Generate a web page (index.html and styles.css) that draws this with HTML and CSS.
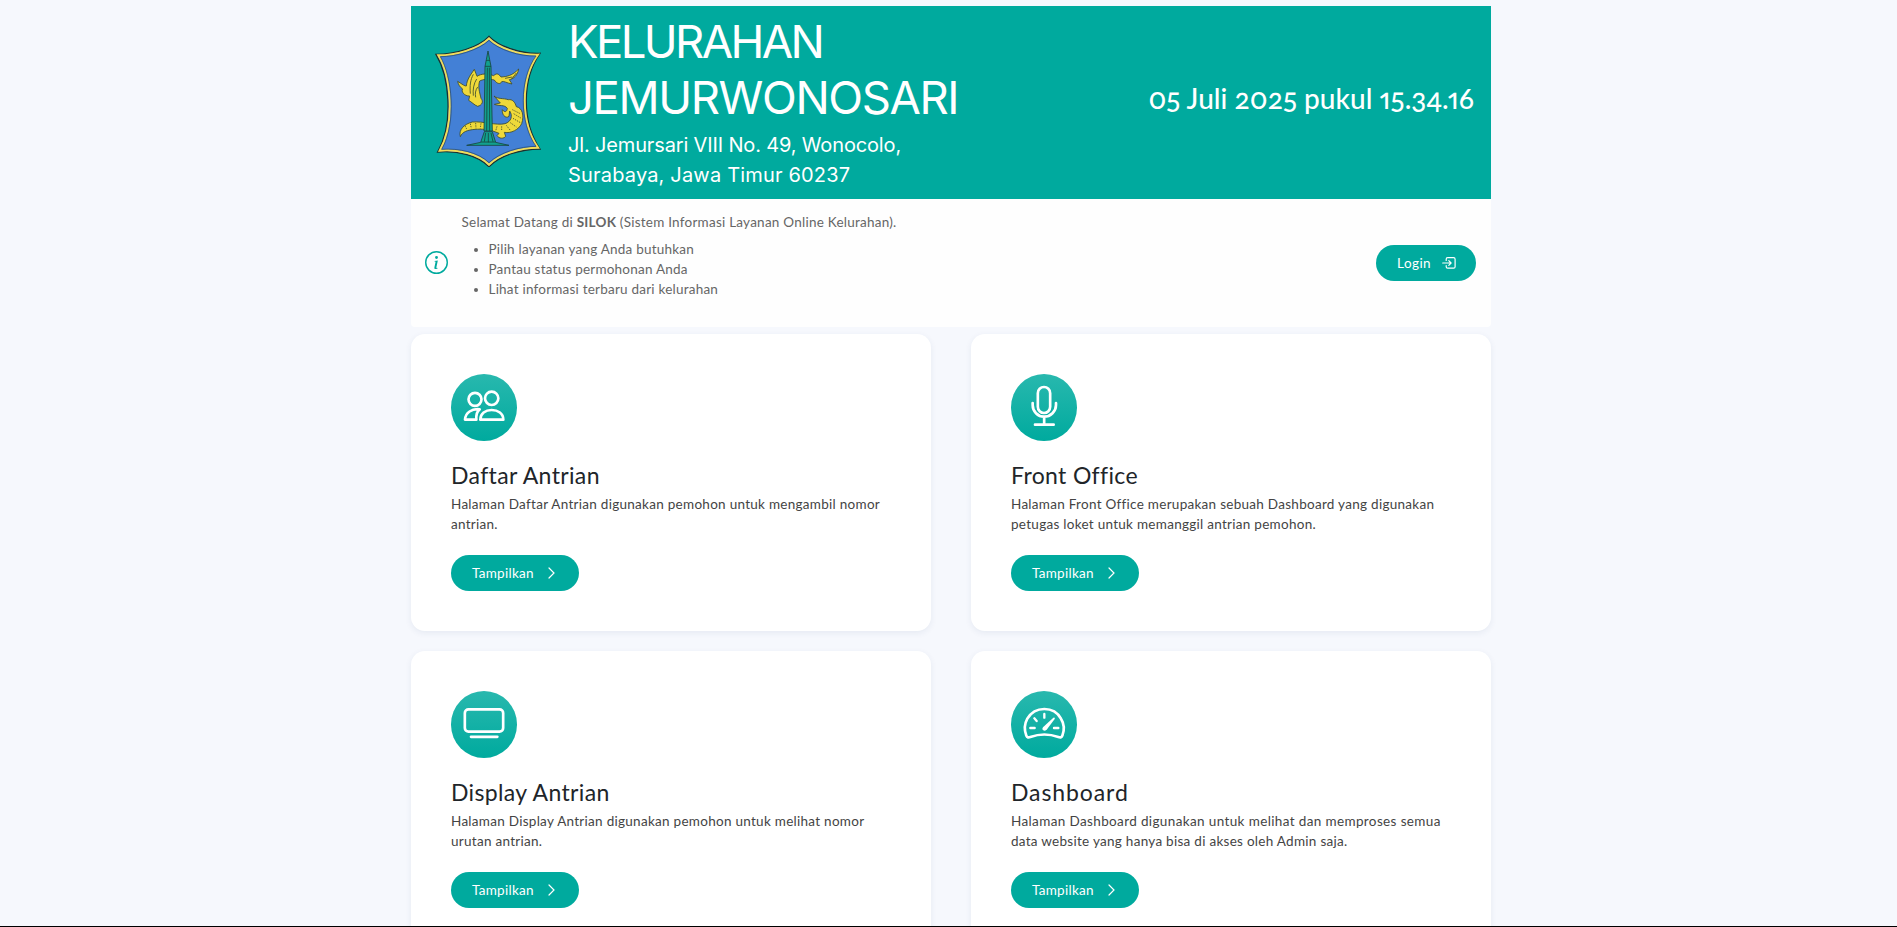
FILE: index.html
```
<!DOCTYPE html>
<html lang="id">
<head>
<meta charset="utf-8">
<title>SILOK - Kelurahan Jemurwonosari</title>
<link rel="stylesheet" href="styles.css">
</head>
<body>
<main class="page">
  <header class="banner">
    <svg class="crest" viewBox="30 28 318 398" preserveAspectRatio="none">
      <path d="M192 32C160 66 90 86 33 86C72 150 88 290 38 379C100 374 160 390 192 423C224 390 285 370 345 370C290 290 290 160 345 83C290 86 220 62 192 32Z" fill="#4380d6" stroke="#1e2f2c" stroke-width="4"/>
      <path d="M192 38C160 70 92 89 40 89C77 150 92 290 44 375C100 370 160 385 192 417C224 385 285 366 339 366C286 290 286 160 339 87C285 89 220 67 192 38Z" fill="none" stroke="#f3dd58" stroke-width="6"/>
      <path d="M192 44C160 74 94 93 46 93C81 152 96 290 50 371C102 367 160 380 192 411C224 380 285 362 333 362C282 290 282 160 333 91C285 93 220 72 192 44Z" fill="none" stroke="#26445f" stroke-width="2"/>
      <g fill="#efd93a" stroke="#3c4a2c" stroke-width="2.5" stroke-linejoin="round">
        <path d="M98 167C112 176 120 182 124 181C126 160 138 146 148 131L156 152C170 143 188 143 206 150C216 140 222 146 228 154C245 153 262 150 281 130C278 148 266 160 253 162L261 175C245 172 236 165 230 168C226 178 214 173 208 163C192 159 172 161 164 166C158 184 164 200 168 218C176 228 172 238 158 242C148 238 140 229 131 224L134 211C118 212 107 196 113 190C104 184 100 176 98 167Z"/>
        <path d="M207 211C220 221 234 217 250 222C262 220 270 229 274 243C292 246 298 270 290 294C281 312 258 324 238 320L242 332C236 340 222 339 216 330L222 323C190 309 170 310 150 311C128 313 112 318 106 333C100 312 118 295 142 289C175 286 212 300 240 294C259 288 264 270 254 256L252 272C240 281 230 264 232 252C240 262 246 258 247 248C238 236 224 242 208 236L226 232Z"/>
        <path d="M145 146C136 162 134 180 136 204M155 160C146 174 143 192 145 210M158 184C151 194 150 204 152 215M260 160L274 142M240 158L262 154" fill="none"/>
        <path d="M262 252L286 264M266 264L289 278M264 278L288 292M256 291L274 304M244 299L256 314M120 300L126 312M136 294L139 308M152 292L153 308M168 293L166 308M216 302L212 316M230 302L230 316" fill="none" stroke-dasharray="4 3"/>
      </g>
      <g fill="#11a08e" stroke="#18453f" stroke-width="2.5">
        <path d="M189 76L184 102L180 122L177 316H202L198 122L194 102Z"/>
        <path d="M178 318H202L212 350L252 359H125L167 350Z"/>
        <path d="M187 126L185 316M193 126L194 316M180 122H198M183 104H195M182 322L178 348M190 322V350M198 322L204 348M168 349H212" fill="none"/>
      </g>
    </svg>
    <div class="identity">
      <h1 class="name"><span class="name-first">KELURAHAN</span><br><span class="name-second">JEMURWONOSARI</span></h1>
      <p class="address"><span class="street">Jl. Jemursari VIII No. 49, Wonocolo,</span><br><span class="city">Surabaya, Jawa Timur 60237</span></p>
    </div>
    <time class="clock">05 Juli 2025 pukul 15.34.16</time>
  </header>

  <section class="welcome">
    <svg class="info-icon" viewBox="0 0 16 16" fill="#00aa9e">
      <path d="M8 15A7 7 0 1 1 8 1a7 7 0 0 1 0 14zm0 1A8 8 0 1 0 8 0a8 8 0 0 0 0 16z"/>
      <path d="m8.930 6.588-2.290.287-.082.380.450.083c.294.070.352.176.288.469l-.738 3.468c-.194.897.105 1.319.808 1.319.545 0 1.178-.252 1.465-.598l.088-.416c-.200.176-.492.246-.686.246-.275 0-.375-.193-.304-.533L8.930 6.588zM9 4.500a1 1 0 1 1-2 0 1 1 0 0 1 2 0z"/>
    </svg>
    <div class="welcome-text">
      <p class="greeting">Selamat Datang di <strong>SILOK</strong> (Sistem Informasi Layanan Online Kelurahan).</p>
      <ul class="steps">
        <li>Pilih layanan yang Anda butuhkan</li>
        <li>Pantau status permohonan Anda</li>
        <li>Lihat informasi terbaru dari kelurahan</li>
      </ul>
    </div>
    <a class="button login">Login
      <svg class="login-icon" viewBox="0 0 14 12" fill="none" stroke="#fff" stroke-width="1.2" stroke-linecap="round" stroke-linejoin="round">
        <path d="M4.200 3.400V2.200Q4.200.700 5.700.700H11.600Q13.100.700 13.100 2.200V9.700Q13.100 11.200 11.600 11.200H5.700Q4.200 11.200 4.200 9.700V8.500"/><path d="M.700 6H9M6.800 3.700 9.100 6 6.800 8.300"/>
      </svg>
    </a>
  </section>

  <section class="cards">
    <article class="card">
      <svg class="badge" viewBox="21 12 198 200" preserveAspectRatio="none">
        <g fill="none" stroke="#fff" stroke-width="8" stroke-linejoin="round">
          <circle cx="93" cy="88" r="19.500"/><circle cx="143" cy="85" r="20"/>
          <path d="M107 118C84 115 64 128 63 149H97C96 135 99 124 107 118Z"/>
          <path d="M109 149C109 130 124 120 143 120S178 130 178 149Z"/>
        </g>
      </svg>
      <h2 class="title">Daftar Antrian</h2>
      <p class="text">Halaman Daftar Antrian digunakan pemohon untuk mengambil nomor<br>antrian.</p>
      <a class="button">Tampilkan <svg class="chevron" viewBox="0 0 7 12"><path d="M1 1 6 6 1 11"/></svg></a>
    </article>
    <article class="card">
      <svg class="badge" viewBox="21 12 198 200" preserveAspectRatio="none">
        <g fill="none" stroke="#fff" stroke-width="8" stroke-linecap="round">
          <rect x="101.500" y="51" width="37" height="78" rx="18.500"/>
          <path d="M86 99V105C86 124 101 140 120.500 140S156 124 156 105V99M120.500 140V164M93 164H149"/>
        </g>
      </svg>
      <h2 class="title">Front Office</h2>
      <p class="text">Halaman Front Office merupakan sebuah Dashboard yang digunakan<br>petugas loket untuk memanggil antrian pemohon.</p>
      <a class="button">Tampilkan <svg class="chevron" viewBox="0 0 7 12"><path d="M1 1 6 6 1 11"/></svg></a>
    </article>
    <article class="card">
      <svg class="badge" viewBox="21 12 198 200" preserveAspectRatio="none">
        <g fill="none" stroke="#fff" stroke-width="8" stroke-linecap="round">
          <rect x="62.500" y="67" width="115" height="67" rx="11"/><path d="M81 149.500H160"/>
        </g>
      </svg>
      <h2 class="title">Display Antrian</h2>
      <p class="text">Halaman Display Antrian digunakan pemohon untuk melihat nomor<br>urutan antrian.</p>
      <a class="button">Tampilkan <svg class="chevron" viewBox="0 0 7 12"><path d="M1 1 6 6 1 11"/></svg></a>
    </article>
    <article class="card">
      <svg class="badge" viewBox="21 9 198 200" preserveAspectRatio="none">
        <g fill="none" stroke="#fff" stroke-width="8" stroke-linecap="round" stroke-linejoin="round">
          <path d="M67 143C60 125 61 108 70 92C82 72 100 63 121 63S160 72 171 92C181 108 182 125 175 143C173 149 168 149 163 147C135 137 107 137 79 147C74 149 69 149 67 143Z"/>
          <path d="M121 78V89M91 91 98 99M79 120H92M150 120H163" stroke-width="7"/>
          <path d="M117 118 148 89Q154 87 152 93L128 125C121 132 111 126 117 118Z" fill="#fff" stroke="none"/>
        </g>
      </svg>
      <h2 class="title title-wide">Dashboard</h2>
      <p class="text"><span class="text-wide">Halaman Dashboard digunakan untuk melihat dan memproses semua</span><br>data website yang hanya bisa di akses oleh Admin saja.</p>
      <a class="button">Tampilkan <svg class="chevron" viewBox="0 0 7 12"><path d="M1 1 6 6 1 11"/></svg></a>
    </article>
  </section>
</main>
</body>
</html>
```
FILE: styles.css
```
* { box-sizing: border-box; }
html { height: 100%; }
body {
  margin: 0;
  height: 100%;
  overflow: hidden;
  background: #f6f8fd;
  border-bottom: 1px solid #000;
  font: 13.500px/20px Lato, "Open Sans", sans-serif;
  letter-spacing: .280px;
  color: #444;
}
h1, h2, p, ul { margin: 0; font-weight: 400; }
.page { width: 1080px; margin: 0 0 0 411px; padding-top: 6px; }
.banner {
  display: flex;
  align-items: flex-start;
  height: 193px;
  padding: 0 17px 0 24px;
  background: #00aa9e;
  color: #fff;
}
.crest { width: 106px; height: 132.700px; margin-top: 28.500px; flex: none; }
.identity { width: 440px; margin-left: 27px; font-family: Inter, "Open Sans", sans-serif; white-space: nowrap; }
.name { padding-top: 8px; font-size: 45.500px; line-height: 56px; }
.name-first { letter-spacing: -2.600px; }
.name-second { letter-spacing: -1.400px; }
.address { padding-top: 4px; font-size: 20px; line-height: 30px; }
.street { letter-spacing: -.150px; }
.city { letter-spacing: .180px; }
.clock {
  align-self: center;
  margin-left: auto;
  padding-bottom: 10px;
  font-size: 28px;
  line-height: 32px;
  font-weight: 500;
  letter-spacing: .050px;
  font-variant-numeric: oldstyle-nums proportional-nums;
  white-space: nowrap;
}
.welcome {
  display: flex;
  align-items: center;
  height: 128px;
  padding: 0 15px 0 14px;
  background: #fefefe;
  border-radius: 0 0 4px 4px;
  color: #666;
}
.info-icon { width: 23px; height: 23px; flex: none; margin-bottom: 1px; }
.welcome-text { margin-left: 13.500px; padding-bottom: 15px; }
.greeting { margin-bottom: 7px; letter-spacing: .240px; }
.steps { padding-left: 27px; letter-spacing: .220px; }
.button {
  display: inline-flex;
  align-items: center;
  width: 128px;
  height: 36px;
  padding: 0 24px 0 21px;
  justify-content: space-between;
  border-radius: 18px;
  background: #00aa9e;
  color: #fff;
}
.login { width: 100px; margin-left: auto; padding: 0 20px 0 21px; letter-spacing: .450px; }
.login-icon { width: 14px; height: 12px; }
.chevron { width: 7px; height: 12px; fill: none; stroke: #fff; stroke-width: 1.2; stroke-linecap: round; }
.cards { display: grid; grid-template-columns: 1fr 1fr; gap: 20px 40px; padding-top: 7px; }
.card {
  height: 297px;
  padding: 40px;
  border-radius: 14px;
  background: #fff;
  box-shadow: 0 2px 6px rgba(40, 60, 110, .08);
  white-space: nowrap;
}
.badge {
  display: block;
  width: 66px;
  height: 66.700px;
  border-radius: 50%;
  background: linear-gradient(#28b8ae, #00aa9e);
}
.title { margin-top: 20px; font-size: 23px; line-height: 28px; letter-spacing: .360px; color: #212529; }
.title-wide { letter-spacing: .900px; }
.text { margin: 5px 0 21px; }
.text-wide { letter-spacing: .370px; }
```
